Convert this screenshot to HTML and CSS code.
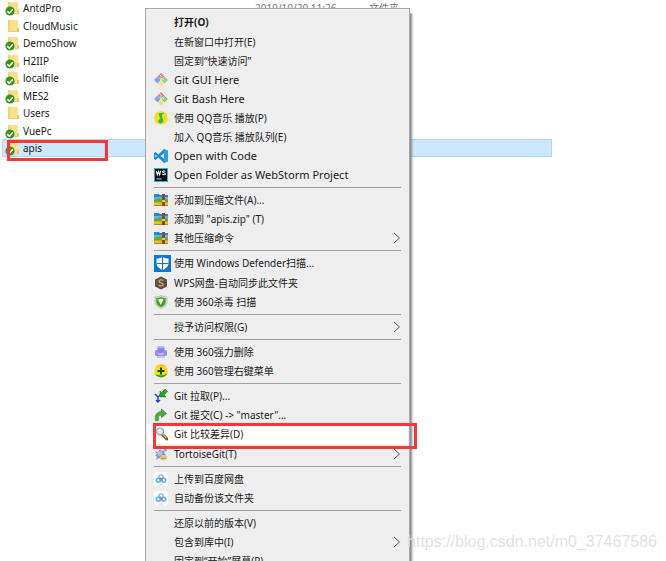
FILE: index.html
```
<!DOCTYPE html>
<html lang="zh-CN">

<head>
  <meta charset="UTF-8" />
  <meta name="viewport" content="width=device-width, initial-scale=1.0" />
  <title>右键菜单</title>
  <link rel="stylesheet" href="styles.css">
</head>

<body>
  <!-- 图标 -->
  <svg class="sprite" aria-hidden="true">
    <symbol id="folder" viewBox="0 0 14 16">
      <path d="M2 2h9l1 1v11H2z" fill="#fbe08b" />
      <path d="M2 2h2v12H2z" fill="#f5d271" />
      <path d="M11 10h2v4h-2z" fill="#eec65c" />
      <path d="M2 13h10v1H2z" fill="#f0cd6c" />
    </symbol>
    <symbol id="check" viewBox="0 0 10 10">
      <circle cx="5" cy="5" r="4.6" fill="#35961f" />
      <path d="M2.3 5.2l2 2 3.5-4" fill="none" stroke="#fff" stroke-width="1.6" />
    </symbol>
    <symbol id="git" viewBox="0 0 14 14">
      <path d="M7 0l3.4 3.4L7 6.8 3.6 3.4z" fill="#f47c78" />
      <path d="M3.5 3.6L7 7l-3.5 3.5L0 7z" fill="#79a8f5" />
      <path d="M10.5 3.6L14 7l-3.5 3.5L7 7z" fill="#8bd47b" />
      <path d="M7 7.2l3.4 3.4L7 14l-3.4-3.4z" fill="#ffe17b" />
      <path d="M5.8 2l1.8 1.8M7 4.5v4M8.4 5.6l1.8 1.6" fill="none" stroke="#f4f4f4" stroke-width="1" />
    </symbol>
    <symbol id="music" viewBox="0 0 14 14">
      <circle cx="7" cy="7" r="6.8" fill="#fedc13" />
      <path d="M4.4 2.5c2-.7 4 .1 5.6-1.2-.3 2-1.4 2.2-2.4 2.4l1.6 5.4c.6 2-1 3.3-2.7 3.1-3-.3-3.1-4-.1-4.2z" fill="#20bd65" />
    </symbol>
    <symbol id="code" viewBox="0 0 14 14">
      <path d="M10 0l4 1.7v10.6L10 14 4.4 8.6 1.6 11 0 10V4l1.6-.9 2.8 2.4z" fill="#168bd2" />
      <path d="M10.2 4v6L6.4 7z" fill="#eee" />
      <path d="M1.3 5.6L3 7 1.3 8.6z" fill="#eee" />
      <path d="M10 0l4 1.7v10.6L10 14z" fill="#2ba8eb" opacity=".8" />
    </symbol>
    <symbol id="webstorm" viewBox="0 0 14 14">
      <path d="M0 0h14v14H0z" fill="#20b8c8" />
      <path d="M1 1h12v12H1z" fill="#080b0c" />
      <path d="M2.3 2.8l1 4 1.2-3.4 1.1 3.4 1-4M11.4 3.4c-1-.8-3-.5-2.8.6.2 1 2.7.7 2.7 1.9 0 1.1-2 1.2-3 .3" fill="none" stroke="#fff" stroke-width="1.1" />
      <path d="M2.5 10.4h5v1h-5z" fill="#ddd" />
    </symbol>
    <symbol id="zip" viewBox="0 0 14 14">
      <path d="M0 1h5l1 1h8v4H0z" fill="#2589d2" />
      <path d="M0 4h14v4H0z" fill="#5cb6ee" />
      <path d="M0 7c4-2 10-2 14 0v3H0z" fill="#64ab2d" />
      <path d="M0 9.4h14V13H0z" fill="#f2b929" />
      <path d="M0 12h14v1H0z" fill="#c5811c" />
      <path d="M8 1h3v12H8z" fill="#8d4929" />
      <path d="M8 7h3v2H8z" fill="#e8c276" />
    </symbol>
    <symbol id="defender" viewBox="0 0 17 17">
      <path d="M0 0h17v17H0z" fill="#0878d4" />
      <path d="M8.5 2c2 1.2 4 1.6 6 1.6V8c0 3.5-2.8 5.6-6 7-3.2-1.4-6-3.5-6-7V3.6c2 0 4-.4 6-1.6z" fill="#fff" />
      <path d="M8.5 2v13M2.5 8.5h12" stroke="#0878d4" />
    </symbol>
    <symbol id="wps" viewBox="0 0 14 14">
      <path d="M7 .5l6 3v7l-6 3-6-3v-7z" fill="#5a514b" />
      <path d="M9.2 4.7c-1-1.2-4.3-1-4.2.8.1 1.7 4.2 1.1 4.2 3 0 1.7-3.5 1.8-4.5.5" fill="none" stroke="#e5a54b" stroke-width="1.3" />
    </symbol>
    <symbol id="shield" viewBox="0 0 14 14">
      <path d="M7 .5c2 1 4 1.3 6 1.3v5c0 3.5-2.5 5.5-6 6.8-3.5-1.3-6-3.3-6-6.8v-5c2 0 4-.3 6-1.3z" fill="#d7dcd4" stroke="#a8b0a4" stroke-width=".6" />
      <path d="M7 2c1.5.8 3 1 4.7 1v3.8c0 2.7-1.9 4.3-4.7 5.4-2.8-1.1-4.7-2.7-4.7-5.4V3C4 3 5.5 2.8 7 2z" fill="#47a517" />
      <path d="M4 4.8c2-1.5 4-1.3 5.5-.2L6.8 9.8 5.6 7.5z" fill="#fff" />
    </symbol>
    <symbol id="shred" viewBox="0 0 14 14">
      <rect x="3" y="1" width="8" height="7" rx="1.5" fill="#b9b3ff" />
      <rect x="1" y="5" width="12" height="6" rx="1.5" fill="#978df0" />
      <rect x="4" y="3" width="6" height="4" rx="1" fill="#8880ed" />
      <path d="M3 11h8v2H3z" fill="#c6c1f6" />
      <path d="M4 9h6" stroke="#d9d6ff" />
    </symbol>
    <symbol id="plus360" viewBox="0 0 14 14">
      <circle cx="7" cy="7" r="6.7" fill="#f5dd13" />
      <path d="M1 10c3 4.5 10 4.7 12.400-1C11 11.5 6 12.5 1 10z" fill="#239b25" />
      <path d="M1 4.5C3.5-.5 10-.8 12.5 3 8 1.5 4 2 1 4.5z" fill="#ffbf15" />
      <path d="M7 3.5v7M3.5 7h7" stroke="#17491a" stroke-width="2" />
    </symbol>
    <symbol id="pull" viewBox="0 0 14 14">
      <path d="M1 5l3 3 3-3M4 8v4M2 11l2 2 2-2" fill="none" stroke="#2639e0" stroke-width="1.4" />
      <path d="M6 8V2l1.6 1.6L11 0l2.6 2.5L10.2 6 12 8z" fill="#25a71d" stroke="#16730f" stroke-width=".5" />
    </symbol>
    <symbol id="commit" viewBox="0 0 14 14">
      <path d="M1.5 12.5C.5 7 3 3.5 7.5 3.5V1l5 4.5-5 4V7C5 7 3.8 9 4.5 12.5z" fill="#4aac36" stroke="#34792b" stroke-width=".6" />
    </symbol>
    <symbol id="diff" viewBox="0 0 14 14">
      <path d="M8 7l5 5" stroke="#7d5018" stroke-width="3" stroke-linecap="round" />
      <path d="M8.5 7l4 4" stroke="#e4ae4c" stroke-width="1.3" />
      <circle cx="6" cy="4.5" r="3.6" fill="#c7e7f6" stroke="#7f98a9" />
      <path d="M4.5 4c.5-1 1.5-1.3 2.5-1" fill="none" stroke="#fff" />
    </symbol>
    <symbol id="tortoise" viewBox="0 0 14 14">
      <path d="M1 4l3 1 2-3 2 2 3-1-1 3 2 2-3 1-1 3-3-1-3 2 1-3-2-2 2-1z" fill="#8496c7" />
      <circle cx="6" cy="6.5" r="2.5" fill="#b2c1e3" />
      <circle cx="11.5" cy="3" r="1.5" fill="#96a4c9" />
      <path d="M6 10l3-2 4 1v3l-4 1.5L6 12z" fill="#e5c875" />
      <path d="M7 11.5h5" stroke="#a8893f" stroke-width=".8" />
    </symbol>
    <symbol id="baidu" viewBox="0 0 14 14">
      <rect width="14" height="14" rx="3" fill="#fff" />
      <circle cx="7" cy="5" r="2.1" fill="none" stroke="#5cc0f6" stroke-width="1.4" />
      <circle cx="4.3" cy="8.3" r="2" fill="none" stroke="#45b5f5" stroke-width="1.5" />
      <circle cx="9.7" cy="8.3" r="2" fill="none" stroke="#45b5f5" stroke-width="1.5" />
      <path d="M6 5.8l2.5 2.8" stroke="#f0606e" stroke-width="1.8" />
      <path d="M4.5 13h5" stroke="#f9c8d0" />
    </symbol>
    <symbol id="arrow" viewBox="0 0 8 12">
      <path d="M1 1l5.5 5L1 11" fill="none" stroke="#5a5a66" stroke-width="1" />
    </symbol>
  </svg>

  <!-- 文件列表 -->
  <table class="files">
    <tbody>
      <tr>
        <td class="name"><span class="file"><svg class="folder"><use href="#folder" /></svg><svg class="check"><use href="#check" /></svg>AntdPro</span></td>
        <td class="date">2019/10/20 11:26</td>
        <td class="type">文件夹</td>
      </tr>
      <tr>
        <td class="name" colspan="3"><span class="file"><svg class="folder"><use href="#folder" /></svg>CloudMusic</span></td>
      </tr>
      <tr>
        <td class="name" colspan="3"><span class="file"><svg class="folder"><use href="#folder" /></svg><svg class="check"><use href="#check" /></svg>DemoShow</span></td>
      </tr>
      <tr>
        <td class="name" colspan="3"><span class="file"><svg class="folder"><use href="#folder" /></svg><svg class="check"><use href="#check" /></svg>H2IIP</span></td>
      </tr>
      <tr>
        <td class="name" colspan="3"><span class="file"><svg class="folder"><use href="#folder" /></svg><svg class="check"><use href="#check" /></svg>localfile</span></td>
      </tr>
      <tr>
        <td class="name" colspan="3"><span class="file"><svg class="folder"><use href="#folder" /></svg><svg class="check"><use href="#check" /></svg>MES2</span></td>
      </tr>
      <tr>
        <td class="name" colspan="3"><span class="file"><svg class="folder"><use href="#folder" /></svg>Users</span></td>
      </tr>
      <tr>
        <td class="name" colspan="3"><span class="file"><svg class="folder"><use href="#folder" /></svg><svg class="check"><use href="#check" /></svg>VuePc</span></td>
      </tr>
      <tr class="active">
        <td class="name" colspan="3"><span class="file"><svg class="folder"><use href="#folder" /></svg><svg class="check"><use href="#check" /></svg>apis<i class="mark"></i></span></td>
      </tr>
    </tbody>
  </table>

  <!-- 右键菜单 -->
  <div class="menu">
    <ul>
      <li><button class="item default">打开(O)</button></li>
      <li><button class="item">在新窗口中打开(E)</button></li>
      <li><button class="item">固定到“快速访问”</button></li>
      <li><button class="item en"><svg class="icon"><use href="#git" /></svg>Git GUI Here</button></li>
      <li><button class="item en"><svg class="icon"><use href="#git" /></svg>Git Bash Here</button></li>
      <li><button class="item"><svg class="icon"><use href="#music" /></svg>使用 QQ音乐 播放(P)</button></li>
      <li><button class="item">加入 QQ音乐 播放队列(E)</button></li>
      <li><button class="item en"><svg class="icon"><use href="#code" /></svg>Open with Code</button></li>
      <li><button class="item en"><svg class="icon"><use href="#webstorm" /></svg>Open Folder as WebStorm Project</button></li>
    </ul>
    <ul>
      <li><button class="item"><svg class="icon"><use href="#zip" /></svg>添加到压缩文件(A)...</button></li>
      <li><button class="item"><svg class="icon"><use href="#zip" /></svg>添加到 "apis.zip" (T)</button></li>
      <li><button class="item"><svg class="icon"><use href="#zip" /></svg>其他压缩命令<svg class="arrow"><use href="#arrow" /></svg></button></li>
    </ul>
    <ul>
      <li><button class="item large"><svg class="icon"><use href="#defender" /></svg>使用 Windows Defender扫描...</button></li>
      <li><button class="item"><svg class="icon"><use href="#wps" /></svg>WPS网盘-自动同步此文件夹</button></li>
      <li><button class="item"><svg class="icon"><use href="#shield" /></svg>使用 360杀毒 扫描</button></li>
    </ul>
    <ul>
      <li><button class="item">授予访问权限(G)<svg class="arrow"><use href="#arrow" /></svg></button></li>
    </ul>
    <ul>
      <li><button class="item"><svg class="icon"><use href="#shred" /></svg>使用 360强力删除</button></li>
      <li><button class="item"><svg class="icon"><use href="#plus360" /></svg>使用 360管理右键菜单</button></li>
    </ul>
    <ul>
      <li><button class="item"><svg class="icon"><use href="#pull" /></svg>Git 拉取(P)...</button></li>
      <li><button class="item"><svg class="icon"><use href="#commit" /></svg>Git 提交(C) -&gt; "master"...</button></li>
      <li><button class="item active"><svg class="icon"><use href="#diff" /></svg>Git 比较差异(D)<i class="mark"></i></button></li>
      <li><button class="item"><svg class="icon"><use href="#tortoise" /></svg>TortoiseGit(T)<svg class="arrow"><use href="#arrow" /></svg></button></li>
    </ul>
    <ul>
      <li><button class="item"><svg class="icon"><use href="#baidu" /></svg>上传到百度网盘</button></li>
      <li><button class="item"><svg class="icon"><use href="#baidu" /></svg>自动备份该文件夹</button></li>
    </ul>
    <ul>
      <li><button class="item">还原以前的版本(V)</button></li>
      <li><button class="item">包含到库中(I)<svg class="arrow"><use href="#arrow" /></svg></button></li>
      <li><button class="item">固定到“开始”屏幕(P)</button></li>
    </ul>
  </div>

  <p class="watermark">https://blog.csdn.net/m0_37467586</p>
</body>

</html>
```

FILE: styles.css
```
* {
  margin: 0;
  padding: 0;
  box-sizing: border-box;
}

body {
  display: flow-root;
  position: relative;
  height: 100vh;
  overflow: hidden;
  background: #fff;
  color: #1a1a1a;
  font: 10px/16px "Noto Sans", "Noto Sans CJK SC", sans-serif;
}

ul {
  list-style: none;
}

.sprite {
  display: none;
}

/* 文件列表 */
.files {
  width: 550px;
  margin: -1px 0 0 2px;
  border-collapse: collapse;
  table-layout: fixed;
}

.files tr {
  height: 18px;
}

.files tr:nth-child(even) {
  height: 17px;
}

.files td {
  vertical-align: middle;
}

.files .name {
  width: 253px;
}

.files .date {
  width: 114px;
}

.files .date,
.files .type {
  color: #777;
}

.files .active {
  background: #cce8ff;
  outline: 1px solid #a8d8fc;
  outline-offset: -1px;
}

.file {
  position: relative;
  display: flex;
  align-items: center;
  gap: 3px;
  height: 16px;
  padding-left: 4px;
}

.folder {
  width: 14px;
  height: 16px;
}

.check {
  position: absolute;
  left: 3px;
  bottom: 0;
  width: 10px;
  height: 10px;
}

/* 红框标记 */
.mark {
  position: absolute;
  border: 3px solid #fc3434;
}

.file .mark {
  left: 5px;
  top: 0;
  width: 101px;
  height: 21px;
}

.item .mark {
  left: 6px;
  top: -1px;
  width: 264px;
  height: 26px;
}

/* 右键菜单 */
.menu {
  position: absolute;
  left: 145px;
  top: 8px;
  width: 265px;
  padding: 3px 1px;
  border: 1px solid #a8a8a8;
  background: #eee;
  box-shadow: 3px 4px 2px -1px #888;
}

.menu ul + ul::before {
  content: "";
  display: block;
  height: 1px;
  margin: 3px 7px 2px;
  background: #a0a0a0;
}

.item {
  position: relative;
  display: flex;
  align-items: center;
  width: 100%;
  height: 19px;
  padding-left: 27px;
  border: 0;
  background: none;
  color: inherit;
  font: inherit;
  text-align: left;
  white-space: pre;
}

.item.en {
  font-size: 11px;
}

.item.default {
  height: 20px;
  font-weight: bold;
}

.item.active {
  z-index: 1;
  height: 20px;
  background: #fff;
}

.item.large {
  height: 20px;
}

.icon {
  position: absolute;
  left: 7px;
  width: 14px;
  height: 14px;
}

.large .icon {
  width: 17px;
  height: 17px;
}

.arrow {
  width: 8px;
  height: 12px;
  margin-left: auto;
  margin-right: 7px;
}

.watermark {
  position: absolute;
  right: 9px;
  bottom: 10px;
  color: #e2e2e2;
  font: 16px/18px "Liberation Sans", Arial, sans-serif;
}
```
